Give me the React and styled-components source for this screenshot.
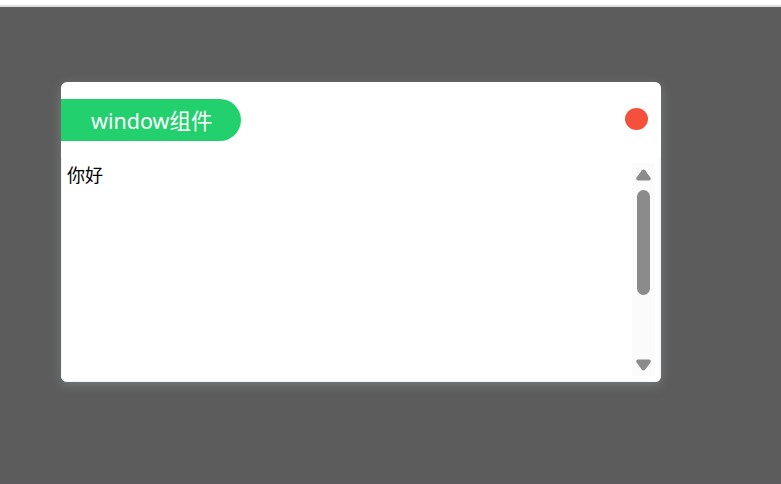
import React from "react";
import styled, { createGlobalStyle } from "styled-components";

const GlobalStyle = createGlobalStyle`
  * { box-sizing: border-box; }
  body {
    margin: 0;
    overflow: hidden;
    font-family: "Noto Sans", "Noto Sans CJK SC", sans-serif;
  }
`;

const Page = styled.div`
  height: 484px;
  display: flex;
  flex-direction: column;
  background: #5c5c5c;
`;

const TopBar = styled.div`
  height: 7px;
  flex: none;
  background: #fff;
  border-bottom: 2px solid #dedede;
`;

const Stage = styled.main`
  flex: 1;
  padding: 75px 120px 0 61px;
  border-bottom: 1px solid #625a60;
`;

const Dialog = styled.section`
  width: 600px;
  height: 300px;
  display: flex;
  flex-direction: column;
  border-radius: 6px;
  background: #fff;
  box-shadow: 0 3px 12px rgba(165, 172, 172, 0.38);
`;

const TitleBar = styled.header`
  height: 75px;
  flex: none;
  display: flex;
  align-items: center;
  justify-content: space-between;
  padding-right: 13px;
`;

const Title = styled.h1`
  width: 180px;
  height: 42px;
  margin: 1px 0 0;
  padding-left: 30px;
  border-radius: 0 21px 21px 0;
  background: #23d06e;
  color: #fff;
  font-size: 21.5px;
  font-weight: 400;
  line-height: 43px;
  white-space: nowrap;
`;

const CloseButton = styled.button`
  width: 23px;
  height: 22px;
  margin-bottom: 1px;
  padding: 0;
  border: 0;
  border-radius: 50%;
  background: #f5503c;
`;

const Body = styled.div`
  flex: 1;
  display: flex;
  justify-content: space-between;
  padding: 5px;
  border: 1px solid #f0f4ff;
  border-top: 0;
  border-radius: 0 0 6px 6px;
`;

const Message = styled.p`
  margin: 0;
  padding-top: 1px;
  color: #000;
  font-size: 18px;
  line-height: 24px;
`;

const ScrollTrack = styled.div`
  width: 23px;
  margin-top: 1px;
  display: flex;
  flex-direction: column;
  align-items: center;
  justify-content: space-between;
  padding: 6px 0 5px;
  background: #fbfbfb;
`;

const ScrollThumb = styled.div`
  width: 13px;
  height: 105px;
  margin: 9px 0 auto;
  border-radius: 7px;
  background: #8b8b8b;
`;

const ArrowIcon = styled.svg`
  display: block;
  width: 15px;
  height: 12px;
  fill: #8b8b8b;
  transform: ${({ $down }) => ($down ? "rotate(180deg)" : "none")};
`;

function Arrow({ down }) {
  return (
    <ArrowIcon $down={down} viewBox="0 0 15 12">
      <path d="M5.9 1.2Q7.5 -.4 9.1 1.2L14.4 8.5Q15.6 11.2 13 11.5H2Q-.6 11.2 .6 8.5Z" />
    </ArrowIcon>
  );
}

export default function App() {
  return (
    <>
      <GlobalStyle />
      <Page>
        <TopBar />
        <Stage>
          <Dialog>
            <TitleBar>
              <Title>window组件</Title>
              <CloseButton aria-label="关闭" />
            </TitleBar>
            <Body>
              <Message>你好</Message>
              <ScrollTrack>
                <Arrow />
                <ScrollThumb />
                <Arrow down />
              </ScrollTrack>
            </Body>
          </Dialog>
        </Stage>
      </Page>
    </>
  );
}
